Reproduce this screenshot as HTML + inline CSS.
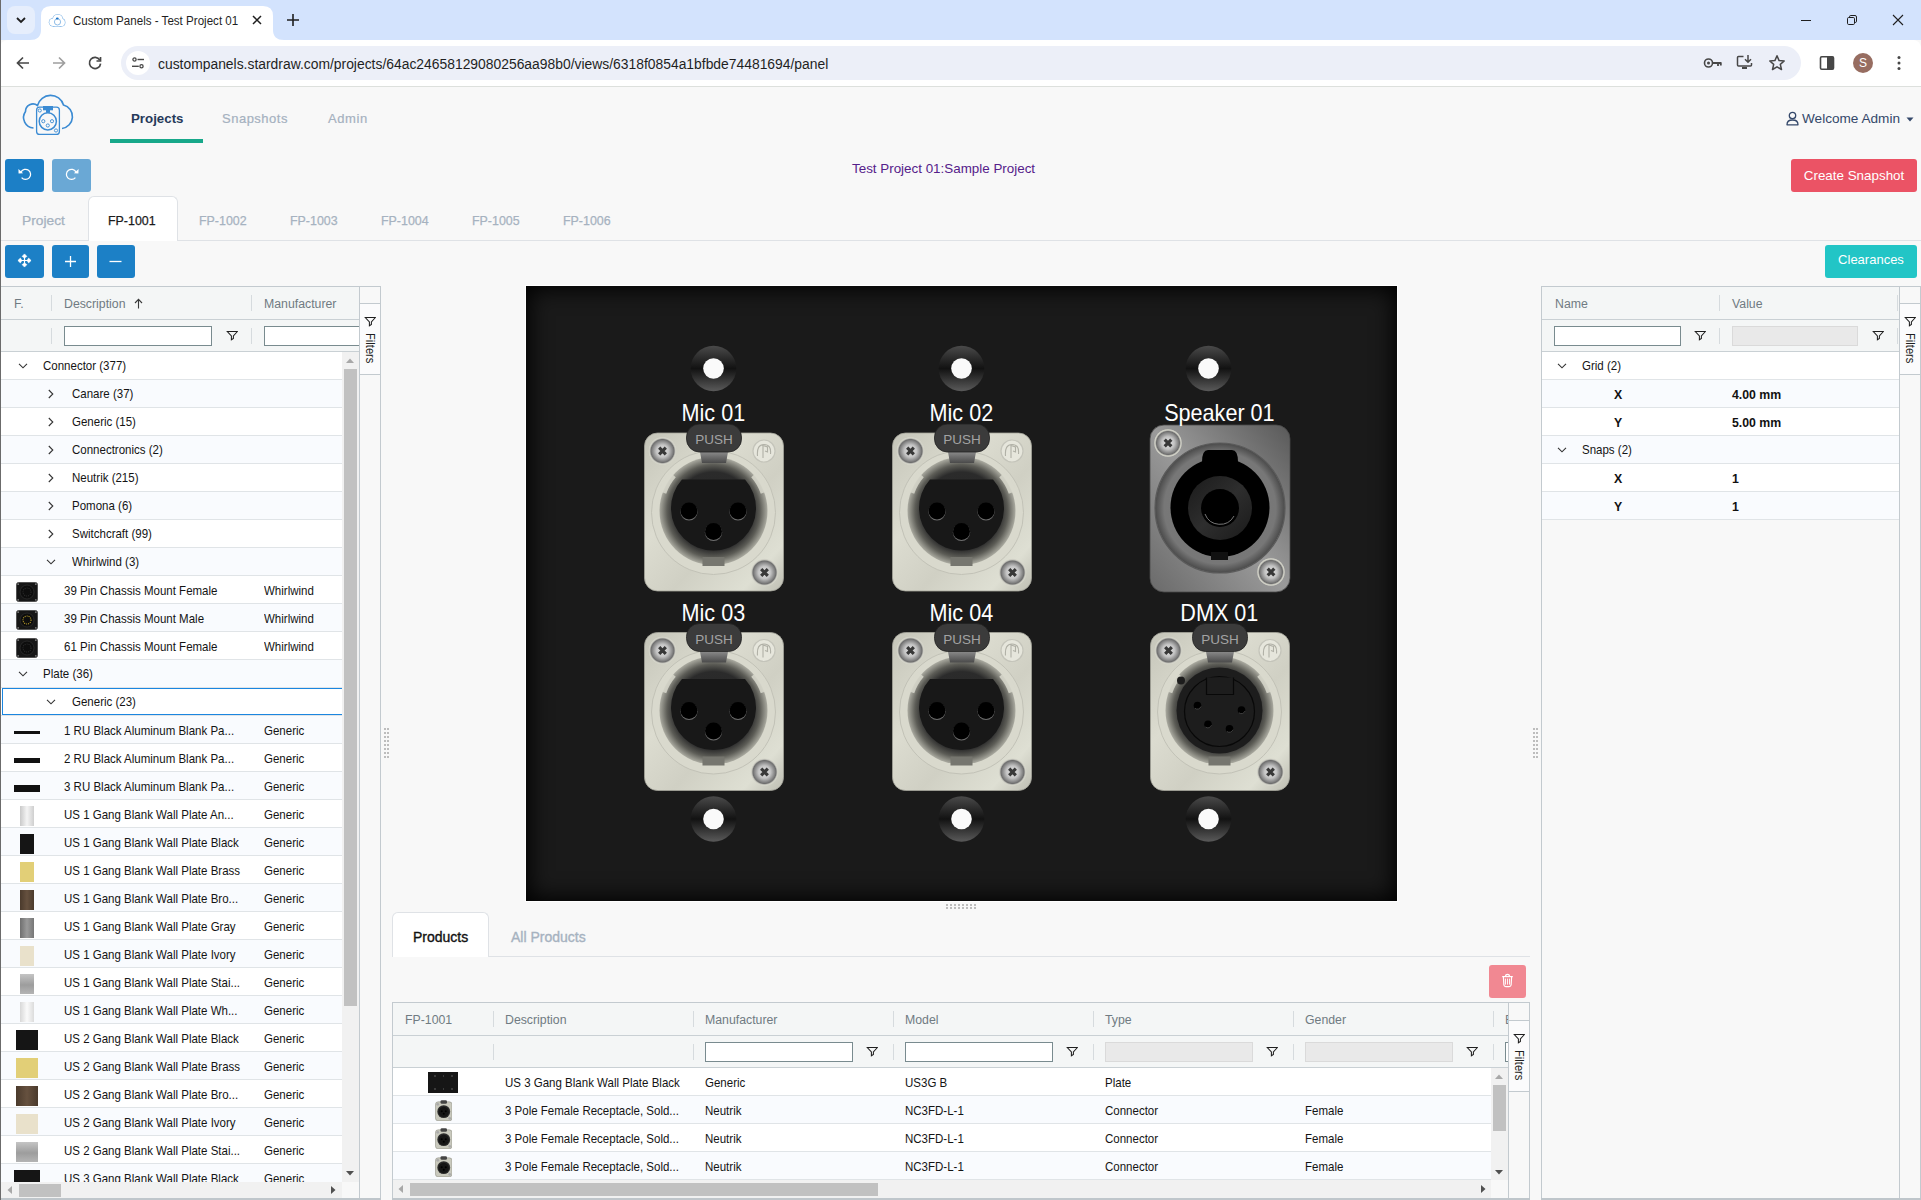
<!DOCTYPE html>
<html><head><meta charset="utf-8"><title>Custom Panels - Test Project 01</title>
<style>
*{box-sizing:border-box;margin:0;padding:0}
html,body{width:1921px;height:1200px;overflow:hidden;background:#f8f8f8;font-family:"Liberation Sans",sans-serif;color:#222;position:relative}
.a{position:absolute}
.t{position:absolute;white-space:nowrap;line-height:1}
.sx{display:inline-block;transform-origin:0 0}
.btn{position:absolute;border-radius:3px;background:#1c80c6}
</style></head>
<body>
<div class="a" style="left:0;top:0;width:1921px;height:40px;background:#d3e3fd"></div>
<div class="a" style="left:7px;top:6px;width:28px;height:28px;border-radius:8px;background:#e6eefc"></div>
<svg class="a" style="left:14px;top:13px" width="14" height="14" viewBox="0 0 14 14"><path d="M3 5 L7 9 L11 5" fill="none" stroke="#1f1f1f" stroke-width="1.8"/></svg>
<svg class="a" style="left:30px;top:6px" width="254" height="34" viewBox="0 0 254 34"><path d="M0 34 Q11 34 11 24 L11 10 Q11 0 21 0 L233 0 Q243 0 243 10 L243 24 Q243 34 254 34 Z" fill="#fff"/></svg>
<svg class="a" style="left:48px;top:13px" width="18" height="15" viewBox="0 0 18 15"><g fill="#6aa8e2"><circle cx="5" cy="9.3" r="4.2"/><circle cx="9.8" cy="6.3" r="5.4"/><circle cx="13.3" cy="9.4" r="4.1"/><rect x="5" y="8" width="8.3" height="5.5"/></g><g fill="#fff"><circle cx="5" cy="9.3" r="3.7"/><circle cx="9.8" cy="6.3" r="4.9"/><circle cx="13.3" cy="9.4" r="3.6"/><rect x="5" y="8" width="8.3" height="5"/></g><circle cx="9.5" cy="8.9" r="3.1" fill="none" stroke="#8cbbe6" stroke-width="1"/><ellipse cx="9.3" cy="5.4" rx="1.4" ry="1" fill="#1b72c6"/></svg>
<div class="t" style="left:73px;top:15px;font-size:12px;color:#1f1f1f"><span class="sx" style="transform:scaleX(.965)">Custom Panels - Test Project 01</span></div>
<svg class="a" style="left:251px;top:14px" width="12" height="12" viewBox="0 0 12 12"><path d="M2 2 L10 10 M10 2 L2 10" stroke="#1f1f1f" stroke-width="1.5"/></svg>
<svg class="a" style="left:286px;top:13px" width="14" height="14" viewBox="0 0 14 14"><path d="M7 1 V13 M1 7 H13" stroke="#1f1f1f" stroke-width="1.6"/></svg>
<div class="a" style="left:1801px;top:20px;width:10px;height:1px;background:#1f1f1f"></div>
<svg class="a" style="left:1845px;top:13px" width="14" height="14" viewBox="0 0 14 14"><rect x="2.5" y="4.5" width="7" height="7" rx="1.2" fill="none" stroke="#1f1f1f" stroke-width="1"/><path d="M4.5 4.5 V3.8 Q4.5 2.5 5.8 2.5 H10 Q11.5 2.5 11.5 4 V8.2 Q11.5 9.5 10.2 9.5 H9.5" fill="none" stroke="#1f1f1f" stroke-width="1"/></svg>
<svg class="a" style="left:1891px;top:13px" width="14" height="14" viewBox="0 0 14 14"><path d="M2 2 L12 12 M12 2 L2 12" stroke="#1f1f1f" stroke-width="1.1"/></svg>
<div class="a" style="left:0;top:40px;width:1921px;height:47px;background:#fff;border-radius:8px 8px 0 0;border-bottom:1px solid #dde0dd"></div>
<div class="a" style="left:121px;top:46px;width:1680px;height:34px;border-radius:17px;background:#eceff8"></div>
<svg class="a" style="left:15px;top:55px" width="16" height="16" viewBox="0 0 16 16"><path d="M14 8 H3 M8 2.5 L2.5 8 L8 13.5" fill="none" stroke="#474747" stroke-width="1.7"/></svg>
<svg class="a" style="left:51px;top:55px" width="16" height="16" viewBox="0 0 16 16"><path d="M2 8 H13 M8 2.5 L13.5 8 L8 13.5" fill="none" stroke="#9e9e9e" stroke-width="1.7"/></svg>
<svg class="a" style="left:87px;top:55px" width="16" height="16" viewBox="0 0 16 16"><path d="M12.8 5 A5.6 5.6 0 1 0 13.6 8.6" fill="none" stroke="#474747" stroke-width="1.7"/><path d="M13.5 2 V6 H9.5" fill="none" stroke="#474747" stroke-width="1.7"/></svg>
<div class="a" style="left:126px;top:51px;width:24px;height:24px;border-radius:12px;background:#fff"></div>
<svg class="a" style="left:131px;top:56px" width="14" height="14" viewBox="0 0 14 14"><circle cx="3.5" cy="3.5" r="1.6" fill="none" stroke="#474747" stroke-width="1.3"/><path d="M6.5 3.5 H13" stroke="#474747" stroke-width="1.4"/><circle cx="10.5" cy="10.3" r="1.6" fill="none" stroke="#474747" stroke-width="1.3"/><path d="M1 10.3 H7.8" stroke="#474747" stroke-width="1.4"/></svg>
<div class="t" style="left:158px;top:57px;font-size:14px;color:#1f1f1f"><span class="sx" style="transform:scaleX(.991)">custompanels.stardraw.com/projects/64ac24658129080256aa98b0/views/6318f0854a1bfbde74481694/panel</span></div>
<svg class="a" style="left:1703px;top:55px" width="20" height="16" viewBox="0 0 20 16"><circle cx="5.5" cy="8" r="4" fill="none" stroke="#474747" stroke-width="1.6"/><circle cx="5.5" cy="8" r="1.5" fill="#474747"/><path d="M9.5 8 H18.5 M15 8 V11 M17.8 8 V10.5" stroke="#474747" stroke-width="1.8"/></svg>
<svg class="a" style="left:1736px;top:54px" width="18" height="18" viewBox="0 0 18 18"><path d="M7.5 2.5 H2.5 Q1.5 2.5 1.5 3.5 V11 Q1.5 12 2.5 12 H14.5 Q15.5 12 15.5 11 V9" fill="none" stroke="#474747" stroke-width="1.5"/><path d="M12 1 V8 M9 5.2 L12 8.2 L15 5.2" fill="none" stroke="#474747" stroke-width="1.5"/><rect x="6" y="13" width="5" height="2" fill="#474747"/></svg>
<svg class="a" style="left:1768px;top:54px" width="18" height="18" viewBox="0 0 18 18"><path d="M9 1.8 L11.1 6.6 L16.2 7 L12.3 10.4 L13.5 15.5 L9 12.8 L4.5 15.5 L5.7 10.4 L1.8 7 L6.9 6.6 Z" fill="none" stroke="#474747" stroke-width="1.5" stroke-linejoin="round"/></svg>
<svg class="a" style="left:1819px;top:55px" width="16" height="16" viewBox="0 0 16 16"><rect x="1.5" y="1.8" width="13" height="12.4" rx="1.2" fill="none" stroke="#474747" stroke-width="1.6"/><rect x="8" y="1.8" width="6.5" height="12.4" fill="#474747"/></svg>
<div class="a" style="left:1853px;top:53px;width:20px;height:20px;border-radius:10px;background:#976d61"></div>
<div class="t" style="left:1853px;top:57px;width:20px;text-align:center;font-size:12px;color:#fff">S</div>
<svg class="a" style="left:1895px;top:55px" width="8" height="16" viewBox="0 0 8 16"><circle cx="4" cy="2.5" r="1.5" fill="#474747"/><circle cx="4" cy="8" r="1.5" fill="#474747"/><circle cx="4" cy="13.5" r="1.5" fill="#474747"/></svg>
<div class="a" style="left:0;top:0;width:1px;height:1200px;background:#6b6b6b;z-index:60"></div>
<svg class="a" style="left:16px;top:90px" width="64" height="50" viewBox="0 0 64 50"><path d="M17.5 38 A10.5 10.5 0 0 1 9.5 21.5 A7.5 7.5 0 0 1 21.5 15.5 A13.5 13.5 0 0 1 47.5 15 A12 12 0 0 1 46 38.5" fill="none" stroke="#3b8bd3" stroke-width="1.6"/><rect x="20.6" y="17.2" width="22.8" height="27.2" rx="3" fill="none" stroke="#3b8bd3" stroke-width="1.3"/><rect x="27" y="16" width="10" height="4.3" fill="#3b8bd3"/><rect x="30" y="20" width="4" height="2.8" fill="#3b8bd3"/><circle cx="31.8" cy="31.3" r="8.6" fill="none" stroke="#3b8bd3" stroke-width="1.5"/><circle cx="27.3" cy="31.2" r="1.6" fill="none" stroke="#3b8bd3" stroke-width="0.9"/><circle cx="36" cy="31.2" r="1.6" fill="none" stroke="#3b8bd3" stroke-width="0.9"/><circle cx="31.8" cy="35.5" r="1.6" fill="none" stroke="#3b8bd3" stroke-width="0.9"/><circle cx="23.8" cy="20.5" r="1.6" fill="none" stroke="#3b8bd3" stroke-width="0.9"/><circle cx="40" cy="40.5" r="1.6" fill="none" stroke="#3b8bd3" stroke-width="0.9"/></svg>
<div class="t" style="left:131px;top:112px;font-size:13.3px;font-weight:bold;color:#263a5a">Projects</div>
<div class="a" style="left:110px;top:139px;width:93px;height:4px;background:#17a88a"></div>
<div class="t" style="left:222px;top:112px;font-size:13px;letter-spacing:.5px;-webkit-text-stroke:.2px #a5b1bf;color:#a5b1bf">Snapshots</div>
<div class="t" style="left:328px;top:112px;font-size:13px;letter-spacing:.6px;-webkit-text-stroke:.2px #a5b1bf;color:#a5b1bf">Admin</div>
<svg class="a" style="left:1786px;top:111px" width="13" height="15" viewBox="0 0 13 15"><circle cx="6.5" cy="4.5" r="3.2" fill="none" stroke="#34486a" stroke-width="1.3"/><path d="M1 13.8 Q1 9 6.5 9 Q12 9 12 13.8 Z" fill="none" stroke="#34486a" stroke-width="1.3" stroke-linejoin="round"/></svg>
<div class="t" style="left:1802px;top:112px;font-size:13.6px;color:#34486a">Welcome Admin</div>
<svg class="a" style="left:1906px;top:117px" width="8" height="5" viewBox="0 0 8 5"><path d="M0.5 0.5 H7.5 L4 4.5 Z" fill="#34486a"/></svg>
<div class="btn" style="left:5px;top:159px;width:39px;height:33px;background:#1c7fc6"></div>
<svg class="a" style="left:17px;top:166px" width="17" height="17" viewBox="0 0 17 17"><path d="M4.08 5.85 A5.1 5.1 0 1 1 4.6 11.68" fill="none" stroke="#fff" stroke-width="1.25"/><path d="M1.4 2.9 L1.6 7.6 L6.1 7.2 Z" fill="#fff"/></svg>
<div class="btn" style="left:52px;top:159px;width:39px;height:33px;background:#6aa8d5"></div>
<svg class="a" style="left:63px;top:166px" width="17" height="17" viewBox="0 0 17 17"><g transform="translate(17,0) scale(-1,1)"><path d="M4.08 5.85 A5.1 5.1 0 1 1 4.6 11.68" fill="none" stroke="#fff" stroke-width="1.25"/><path d="M1.4 2.9 L1.6 7.6 L6.1 7.2 Z" fill="#fff"/></g></svg>
<div class="t" style="left:852px;top:162px;font-size:13.4px;color:#55208a">Test Project 01:Sample Project</div>
<div class="btn" style="left:1791px;top:159px;width:126px;height:33px;background:#eb5365"></div>
<div class="t" style="left:1791px;top:169px;width:126px;text-align:center;font-size:13.4px;color:#fff">Create Snapshot</div>
<div class="a" style="left:0;top:240px;width:1921px;height:1px;background:#dfe2e6"></div>
<div class="a" style="left:88px;top:196px;width:90px;height:45px;background:#fff;border:1px solid #dfe2e6;border-bottom:none;border-radius:6px 6px 0 0"></div>
<div class="t" style="left:22px;top:214px;font-size:13px;color:#a6b2c0;-webkit-text-stroke:.25px #a6b2c0"><span style="display:inline-block;transform:scaleX(1.06);transform-origin:0 0">Project</span></div>
<div class="t" style="left:108px;top:214px;font-size:13px;color:#1b1b1b;-webkit-text-stroke:.25px #1b1b1b"><span style="display:inline-block;transform:scaleX(0.955);transform-origin:0 0">FP-1001</span></div>
<div class="t" style="left:199px;top:214px;font-size:13px;color:#a6b2c0;-webkit-text-stroke:.25px #a6b2c0"><span style="display:inline-block;transform:scaleX(0.955);transform-origin:0 0">FP-1002</span></div>
<div class="t" style="left:290px;top:214px;font-size:13px;color:#a6b2c0;-webkit-text-stroke:.25px #a6b2c0"><span style="display:inline-block;transform:scaleX(0.955);transform-origin:0 0">FP-1003</span></div>
<div class="t" style="left:381px;top:214px;font-size:13px;color:#a6b2c0;-webkit-text-stroke:.25px #a6b2c0"><span style="display:inline-block;transform:scaleX(0.955);transform-origin:0 0">FP-1004</span></div>
<div class="t" style="left:472px;top:214px;font-size:13px;color:#a6b2c0;-webkit-text-stroke:.25px #a6b2c0"><span style="display:inline-block;transform:scaleX(0.955);transform-origin:0 0">FP-1005</span></div>
<div class="t" style="left:563px;top:214px;font-size:13px;color:#a6b2c0;-webkit-text-stroke:.25px #a6b2c0"><span style="display:inline-block;transform:scaleX(0.955);transform-origin:0 0">FP-1006</span></div>
<div class="btn" style="left:5px;top:245px;width:39px;height:33px"></div>
<svg class="a" style="left:17px;top:253px" width="15" height="15" viewBox="-7.5 -7.5 15 15"><path d="M0 -5 V5 M-5 0 H5" stroke="#fff" stroke-width="1.2"/><g fill="#fff" stroke="#fff" stroke-width="0.6" stroke-linejoin="round"><path d="M0 -6.6 L2.4 -4.1 L0 -2.6 L-2.4 -4.1 Z"/><path d="M0 6.6 L2.4 4.1 L0 2.6 L-2.4 4.1 Z"/><path d="M-6.6 0 L-4.1 2.4 L-2.6 0 L-4.1 -2.4 Z"/><path d="M6.6 0 L4.1 2.4 L2.6 0 L4.1 -2.4 Z"/></g></svg>
<div class="btn" style="left:52px;top:245px;width:37px;height:33px"></div>
<svg class="a" style="left:63px;top:254px" width="15" height="15" viewBox="0 0 15 15"><path d="M7.5 2 V13 M2 7.5 H13" stroke="#fff" stroke-width="1.3"/></svg>
<div class="btn" style="left:97px;top:245px;width:38px;height:33px"></div>
<svg class="a" style="left:108px;top:254px" width="15" height="15" viewBox="0 0 15 15"><path d="M1.5 7.5 H13.5" stroke="#fff" stroke-width="1.3"/></svg>
<div class="btn" style="left:1825px;top:245px;width:92px;height:33px;background:#22c5c6"></div>
<div class="t" style="left:1825px;top:253px;width:92px;text-align:center;font-size:13px;color:#fff">Clearances</div>
<div class="a" style="left:1px;top:286px;width:358px;height:66px;background:#f4f6f6;"></div>
<div class="a" style="left:1px;top:286px;width:359px;height:1px;background:#c3cacf"></div>
<div class="a" style="left:1px;top:319px;width:358px;height:1px;background:#c9d0d4"></div>
<div class="a" style="left:1px;top:351px;width:358px;height:1px;background:#c9d0d4"></div>
<div class="t" style="left:14px;top:298px;font-size:12.3px;color:#707b82;">F.</div>
<div class="a" style="left:51px;top:295px;width:1px;height:16px;background:#d6dbde"></div>
<div class="t" style="left:64px;top:298px;font-size:12.3px;color:#707b82;">Description</div>
<svg class="a" style="left:134px;top:298px" width="9" height="11" viewBox="0 0 9 11"><path d="M4.5 10.5 V1.5 M1 5 L4.5 1.3 L8 5" fill="none" stroke="#3a3a3a" stroke-width="1.1"/></svg>
<div class="a" style="left:251px;top:295px;width:1px;height:16px;background:#d6dbde"></div>
<div class="t" style="left:264px;top:298px;font-size:12.3px;color:#707b82;">Manufacturer</div>
<div class="a" style="left:51px;top:328px;width:1px;height:16px;background:#d6dbde"></div>
<div class="a" style="left:64px;top:326px;width:148px;height:20px;background:#fff;border:1px solid #798b8f"></div>
<svg class="a" style="left:226px;top:330px" width="12" height="12" viewBox="0 0 12 12"><path d="M1.3 1.5 H11.4 L7.4 5.9 V8.5 L5.4 9.8 V5.9 Z" fill="none" stroke="#1f1f1f" stroke-width="1.05" stroke-linejoin="miter"/></svg>
<div class="a" style="left:251px;top:328px;width:1px;height:16px;background:#d6dbde"></div>
<div class="a" style="left:264px;top:326px;width:96px;height:20px;background:#fff;border:1px solid #798b8f;border-right:none"></div>
<div class="a" style="left:1px;top:352px;width:341px;height:830px;overflow:hidden;background:#fff"><div class="a" style="left:0px;top:0px;width:341px;height:28px;background:#ffffff;"></div>
<div class="a" style="left:0px;top:27px;width:341px;height:1px;background:#e0e4e7"></div>
<svg class="a" style="left:16.5px;top:11px" width="10" height="6" viewBox="0 0 10 6"><path d="M1 0.8 L5 4.8 L9 0.8" fill="none" stroke="#333" stroke-width="1.1"/></svg>
<div class="t" style="left:42px;top:7px;font-size:13px;color:#141414;"><span style="transform:scaleX(.885);transform-origin:0 0;display:inline-block">Connector (377)</span></div>
<div class="a" style="left:0px;top:28px;width:341px;height:28px;background:#f9fbfe;"></div>
<div class="a" style="left:0px;top:55px;width:341px;height:1px;background:#e0e4e7"></div>
<svg class="a" style="left:47px;top:37px" width="6" height="10" viewBox="0 0 6 10"><path d="M0.8 1 L4.8 5 L0.8 9" fill="none" stroke="#333" stroke-width="1.1"/></svg>
<div class="t" style="left:71px;top:35px;font-size:13px;color:#141414;"><span style="transform:scaleX(.885);transform-origin:0 0;display:inline-block">Canare (37)</span></div>
<div class="a" style="left:0px;top:56px;width:341px;height:28px;background:#ffffff;"></div>
<div class="a" style="left:0px;top:83px;width:341px;height:1px;background:#e0e4e7"></div>
<svg class="a" style="left:47px;top:65px" width="6" height="10" viewBox="0 0 6 10"><path d="M0.8 1 L4.8 5 L0.8 9" fill="none" stroke="#333" stroke-width="1.1"/></svg>
<div class="t" style="left:71px;top:63px;font-size:13px;color:#141414;"><span style="transform:scaleX(.885);transform-origin:0 0;display:inline-block">Generic (15)</span></div>
<div class="a" style="left:0px;top:84px;width:341px;height:28px;background:#f9fbfe;"></div>
<div class="a" style="left:0px;top:111px;width:341px;height:1px;background:#e0e4e7"></div>
<svg class="a" style="left:47px;top:93px" width="6" height="10" viewBox="0 0 6 10"><path d="M0.8 1 L4.8 5 L0.8 9" fill="none" stroke="#333" stroke-width="1.1"/></svg>
<div class="t" style="left:71px;top:91px;font-size:13px;color:#141414;"><span style="transform:scaleX(.885);transform-origin:0 0;display:inline-block">Connectronics (2)</span></div>
<div class="a" style="left:0px;top:112px;width:341px;height:28px;background:#ffffff;"></div>
<div class="a" style="left:0px;top:139px;width:341px;height:1px;background:#e0e4e7"></div>
<svg class="a" style="left:47px;top:121px" width="6" height="10" viewBox="0 0 6 10"><path d="M0.8 1 L4.8 5 L0.8 9" fill="none" stroke="#333" stroke-width="1.1"/></svg>
<div class="t" style="left:71px;top:119px;font-size:13px;color:#141414;"><span style="transform:scaleX(.885);transform-origin:0 0;display:inline-block">Neutrik (215)</span></div>
<div class="a" style="left:0px;top:140px;width:341px;height:28px;background:#f9fbfe;"></div>
<div class="a" style="left:0px;top:167px;width:341px;height:1px;background:#e0e4e7"></div>
<svg class="a" style="left:47px;top:149px" width="6" height="10" viewBox="0 0 6 10"><path d="M0.8 1 L4.8 5 L0.8 9" fill="none" stroke="#333" stroke-width="1.1"/></svg>
<div class="t" style="left:71px;top:147px;font-size:13px;color:#141414;"><span style="transform:scaleX(.885);transform-origin:0 0;display:inline-block">Pomona (6)</span></div>
<div class="a" style="left:0px;top:168px;width:341px;height:28px;background:#ffffff;"></div>
<div class="a" style="left:0px;top:195px;width:341px;height:1px;background:#e0e4e7"></div>
<svg class="a" style="left:47px;top:177px" width="6" height="10" viewBox="0 0 6 10"><path d="M0.8 1 L4.8 5 L0.8 9" fill="none" stroke="#333" stroke-width="1.1"/></svg>
<div class="t" style="left:71px;top:175px;font-size:13px;color:#141414;"><span style="transform:scaleX(.885);transform-origin:0 0;display:inline-block">Switchcraft (99)</span></div>
<div class="a" style="left:0px;top:196px;width:341px;height:28px;background:#f9fbfe;"></div>
<div class="a" style="left:0px;top:223px;width:341px;height:1px;background:#e0e4e7"></div>
<svg class="a" style="left:45px;top:207px" width="10" height="6" viewBox="0 0 10 6"><path d="M1 0.8 L5 4.8 L9 0.8" fill="none" stroke="#333" stroke-width="1.1"/></svg>
<div class="t" style="left:71px;top:203px;font-size:13px;color:#141414;"><span style="transform:scaleX(.885);transform-origin:0 0;display:inline-block">Whirlwind (3)</span></div>
<div class="a" style="left:0px;top:224px;width:341px;height:28px;background:#ffffff;"></div>
<div class="a" style="left:0px;top:251px;width:341px;height:1px;background:#e0e4e7"></div>
<svg class="a" style="left:15px;top:230px" width="22" height="20" viewBox="0 0 22 20"><rect x="0.5" y="0.5" width="21" height="19" rx="2" fill="#161616" stroke="#444" stroke-width="0.8"/><circle cx="11" cy="10" r="7" fill="#0d0d0d" stroke="#2c2c2c" stroke-width="0.8"/><circle cx="11" cy="10" r="4" fill="none" stroke="#2a2a2a" stroke-width="1.2" stroke-dasharray="1 1"/><circle cx="2.2" cy="2.2" r="0.9" fill="#777"/><circle cx="19.8" cy="2.2" r="0.9" fill="#777"/><circle cx="2.2" cy="17.8" r="0.9" fill="#777"/><circle cx="19.8" cy="17.8" r="0.9" fill="#777"/></svg>
<div class="t" style="left:63px;top:232px;font-size:13px;color:#141414;"><span style="transform:scaleX(.885);transform-origin:0 0;display:inline-block">39 Pin Chassis Mount Female</span></div>
<div class="t" style="left:263px;top:232px;font-size:13px;color:#141414;"><span style="transform:scaleX(.885);transform-origin:0 0;display:inline-block">Whirlwind</span></div>
<div class="a" style="left:0px;top:252px;width:341px;height:28px;background:#f9fbfe;"></div>
<div class="a" style="left:0px;top:279px;width:341px;height:1px;background:#e0e4e7"></div>
<svg class="a" style="left:15px;top:258px" width="22" height="20" viewBox="0 0 22 20"><rect x="0.5" y="0.5" width="21" height="19" rx="2" fill="#161616" stroke="#444" stroke-width="0.8"/><circle cx="11" cy="10" r="7" fill="#0d0d0d" stroke="#2c2c2c" stroke-width="0.8"/><circle cx="11" cy="10" r="4" fill="none" stroke="#b59a2a" stroke-width="1.2" stroke-dasharray="1 1"/><circle cx="2.2" cy="2.2" r="0.9" fill="#777"/><circle cx="19.8" cy="2.2" r="0.9" fill="#777"/><circle cx="2.2" cy="17.8" r="0.9" fill="#777"/><circle cx="19.8" cy="17.8" r="0.9" fill="#777"/></svg>
<div class="t" style="left:63px;top:260px;font-size:13px;color:#141414;"><span style="transform:scaleX(.885);transform-origin:0 0;display:inline-block">39 Pin Chassis Mount Male</span></div>
<div class="t" style="left:263px;top:260px;font-size:13px;color:#141414;"><span style="transform:scaleX(.885);transform-origin:0 0;display:inline-block">Whirlwind</span></div>
<div class="a" style="left:0px;top:280px;width:341px;height:28px;background:#ffffff;"></div>
<div class="a" style="left:0px;top:307px;width:341px;height:1px;background:#e0e4e7"></div>
<svg class="a" style="left:15px;top:286px" width="22" height="20" viewBox="0 0 22 20"><rect x="0.5" y="0.5" width="21" height="19" rx="2" fill="#161616" stroke="#444" stroke-width="0.8"/><circle cx="11" cy="10" r="7" fill="#0d0d0d" stroke="#2c2c2c" stroke-width="0.8"/><circle cx="11" cy="10" r="4" fill="none" stroke="#2a2a2a" stroke-width="1.2" stroke-dasharray="1 1"/><circle cx="2.2" cy="2.2" r="0.9" fill="#777"/><circle cx="19.8" cy="2.2" r="0.9" fill="#777"/><circle cx="2.2" cy="17.8" r="0.9" fill="#777"/><circle cx="19.8" cy="17.8" r="0.9" fill="#777"/></svg>
<div class="t" style="left:63px;top:288px;font-size:13px;color:#141414;"><span style="transform:scaleX(.885);transform-origin:0 0;display:inline-block">61 Pin Chassis Mount Female</span></div>
<div class="t" style="left:263px;top:288px;font-size:13px;color:#141414;"><span style="transform:scaleX(.885);transform-origin:0 0;display:inline-block">Whirlwind</span></div>
<div class="a" style="left:0px;top:308px;width:341px;height:28px;background:#f9fbfe;"></div>
<div class="a" style="left:0px;top:335px;width:341px;height:1px;background:#e0e4e7"></div>
<svg class="a" style="left:16.5px;top:319px" width="10" height="6" viewBox="0 0 10 6"><path d="M1 0.8 L5 4.8 L9 0.8" fill="none" stroke="#333" stroke-width="1.1"/></svg>
<div class="t" style="left:42px;top:315px;font-size:13px;color:#141414;"><span style="transform:scaleX(.885);transform-origin:0 0;display:inline-block">Plate (36)</span></div>
<div class="a" style="left:0px;top:336px;width:341px;height:28px;background:#ffffff;"></div>
<div class="a" style="left:0px;top:363px;width:341px;height:1px;background:#e0e4e7"></div>
<svg class="a" style="left:45px;top:347px" width="10" height="6" viewBox="0 0 10 6"><path d="M1 0.8 L5 4.8 L9 0.8" fill="none" stroke="#333" stroke-width="1.1"/></svg>
<div class="t" style="left:71px;top:343px;font-size:13px;color:#141414;"><span style="transform:scaleX(.885);transform-origin:0 0;display:inline-block">Generic (23)</span></div>
<div class="a" style="left:0px;top:364px;width:341px;height:28px;background:#f9fbfe;"></div>
<div class="a" style="left:0px;top:391px;width:341px;height:1px;background:#e0e4e7"></div>
<div class="a" style="left:13px;top:379px;width:26px;height:3px;background:#111;"></div>
<div class="t" style="left:63px;top:372px;font-size:13px;color:#141414;"><span style="transform:scaleX(.885);transform-origin:0 0;display:inline-block">1 RU Black Aluminum Blank Pa...</span></div>
<div class="t" style="left:263px;top:372px;font-size:13px;color:#141414;"><span style="transform:scaleX(.885);transform-origin:0 0;display:inline-block">Generic</span></div>
<div class="a" style="left:0px;top:392px;width:341px;height:28px;background:#ffffff;"></div>
<div class="a" style="left:0px;top:419px;width:341px;height:1px;background:#e0e4e7"></div>
<div class="a" style="left:13px;top:406px;width:26px;height:5px;background:#111;"></div>
<div class="t" style="left:63px;top:400px;font-size:13px;color:#141414;"><span style="transform:scaleX(.885);transform-origin:0 0;display:inline-block">2 RU Black Aluminum Blank Pa...</span></div>
<div class="t" style="left:263px;top:400px;font-size:13px;color:#141414;"><span style="transform:scaleX(.885);transform-origin:0 0;display:inline-block">Generic</span></div>
<div class="a" style="left:0px;top:420px;width:341px;height:28px;background:#f9fbfe;"></div>
<div class="a" style="left:0px;top:447px;width:341px;height:1px;background:#e0e4e7"></div>
<div class="a" style="left:13px;top:433px;width:26px;height:7px;background:#111;"></div>
<div class="t" style="left:63px;top:428px;font-size:13px;color:#141414;"><span style="transform:scaleX(.885);transform-origin:0 0;display:inline-block">3 RU Black Aluminum Blank Pa...</span></div>
<div class="t" style="left:263px;top:428px;font-size:13px;color:#141414;"><span style="transform:scaleX(.885);transform-origin:0 0;display:inline-block">Generic</span></div>
<div class="a" style="left:0px;top:448px;width:341px;height:28px;background:#ffffff;"></div>
<div class="a" style="left:0px;top:475px;width:341px;height:1px;background:#e0e4e7"></div>
<div class="a" style="left:19px;top:454px;width:14px;height:20px;background:linear-gradient(90deg,#c9c9c9,#f4f4f4 50%,#cfcfcf);"></div>
<div class="t" style="left:63px;top:456px;font-size:13px;color:#141414;"><span style="transform:scaleX(.885);transform-origin:0 0;display:inline-block">US 1 Gang Blank Wall Plate An...</span></div>
<div class="t" style="left:263px;top:456px;font-size:13px;color:#141414;"><span style="transform:scaleX(.885);transform-origin:0 0;display:inline-block">Generic</span></div>
<div class="a" style="left:0px;top:476px;width:341px;height:28px;background:#f9fbfe;"></div>
<div class="a" style="left:0px;top:503px;width:341px;height:1px;background:#e0e4e7"></div>
<div class="a" style="left:19px;top:482px;width:14px;height:20px;background:#151515;"></div>
<div class="t" style="left:63px;top:484px;font-size:13px;color:#141414;"><span style="transform:scaleX(.885);transform-origin:0 0;display:inline-block">US 1 Gang Blank Wall Plate Black</span></div>
<div class="t" style="left:263px;top:484px;font-size:13px;color:#141414;"><span style="transform:scaleX(.885);transform-origin:0 0;display:inline-block">Generic</span></div>
<div class="a" style="left:0px;top:504px;width:341px;height:28px;background:#ffffff;"></div>
<div class="a" style="left:0px;top:531px;width:341px;height:1px;background:#e0e4e7"></div>
<div class="a" style="left:19px;top:510px;width:14px;height:20px;background:#e2cf77;"></div>
<div class="t" style="left:63px;top:512px;font-size:13px;color:#141414;"><span style="transform:scaleX(.885);transform-origin:0 0;display:inline-block">US 1 Gang Blank Wall Plate Brass</span></div>
<div class="t" style="left:263px;top:512px;font-size:13px;color:#141414;"><span style="transform:scaleX(.885);transform-origin:0 0;display:inline-block">Generic</span></div>
<div class="a" style="left:0px;top:532px;width:341px;height:28px;background:#f9fbfe;"></div>
<div class="a" style="left:0px;top:559px;width:341px;height:1px;background:#e0e4e7"></div>
<div class="a" style="left:19px;top:538px;width:14px;height:20px;background:linear-gradient(90deg,#4a3a2c,#66513f 50%,#4a3a2c);"></div>
<div class="t" style="left:63px;top:540px;font-size:13px;color:#141414;"><span style="transform:scaleX(.885);transform-origin:0 0;display:inline-block">US 1 Gang Blank Wall Plate Bro...</span></div>
<div class="t" style="left:263px;top:540px;font-size:13px;color:#141414;"><span style="transform:scaleX(.885);transform-origin:0 0;display:inline-block">Generic</span></div>
<div class="a" style="left:0px;top:560px;width:341px;height:28px;background:#ffffff;"></div>
<div class="a" style="left:0px;top:587px;width:341px;height:1px;background:#e0e4e7"></div>
<div class="a" style="left:19px;top:566px;width:14px;height:20px;background:linear-gradient(90deg,#6f6f6f,#9a9a9a 50%,#777);"></div>
<div class="t" style="left:63px;top:568px;font-size:13px;color:#141414;"><span style="transform:scaleX(.885);transform-origin:0 0;display:inline-block">US 1 Gang Blank Wall Plate Gray</span></div>
<div class="t" style="left:263px;top:568px;font-size:13px;color:#141414;"><span style="transform:scaleX(.885);transform-origin:0 0;display:inline-block">Generic</span></div>
<div class="a" style="left:0px;top:588px;width:341px;height:28px;background:#f9fbfe;"></div>
<div class="a" style="left:0px;top:615px;width:341px;height:1px;background:#e0e4e7"></div>
<div class="a" style="left:19px;top:594px;width:14px;height:20px;background:#e9e1cb;"></div>
<div class="t" style="left:63px;top:596px;font-size:13px;color:#141414;"><span style="transform:scaleX(.885);transform-origin:0 0;display:inline-block">US 1 Gang Blank Wall Plate Ivory</span></div>
<div class="t" style="left:263px;top:596px;font-size:13px;color:#141414;"><span style="transform:scaleX(.885);transform-origin:0 0;display:inline-block">Generic</span></div>
<div class="a" style="left:0px;top:616px;width:341px;height:28px;background:#ffffff;"></div>
<div class="a" style="left:0px;top:643px;width:341px;height:1px;background:#e0e4e7"></div>
<div class="a" style="left:19px;top:622px;width:14px;height:20px;background:linear-gradient(180deg,#c4c4c4,#9d9d9d 55%,#b4b4b4);"></div>
<div class="t" style="left:63px;top:624px;font-size:13px;color:#141414;"><span style="transform:scaleX(.885);transform-origin:0 0;display:inline-block">US 1 Gang Blank Wall Plate Stai...</span></div>
<div class="t" style="left:263px;top:624px;font-size:13px;color:#141414;"><span style="transform:scaleX(.885);transform-origin:0 0;display:inline-block">Generic</span></div>
<div class="a" style="left:0px;top:644px;width:341px;height:28px;background:#f9fbfe;"></div>
<div class="a" style="left:0px;top:671px;width:341px;height:1px;background:#e0e4e7"></div>
<div class="a" style="left:19px;top:650px;width:14px;height:20px;background:linear-gradient(90deg,#d8d8d8,#fafafa 50%,#dcdcdc);"></div>
<div class="t" style="left:63px;top:652px;font-size:13px;color:#141414;"><span style="transform:scaleX(.885);transform-origin:0 0;display:inline-block">US 1 Gang Blank Wall Plate Wh...</span></div>
<div class="t" style="left:263px;top:652px;font-size:13px;color:#141414;"><span style="transform:scaleX(.885);transform-origin:0 0;display:inline-block">Generic</span></div>
<div class="a" style="left:0px;top:672px;width:341px;height:28px;background:#ffffff;"></div>
<div class="a" style="left:0px;top:699px;width:341px;height:1px;background:#e0e4e7"></div>
<div class="a" style="left:15px;top:678px;width:22px;height:20px;background:#151515;"></div>
<div class="t" style="left:63px;top:680px;font-size:13px;color:#141414;"><span style="transform:scaleX(.885);transform-origin:0 0;display:inline-block">US 2 Gang Blank Wall Plate Black</span></div>
<div class="t" style="left:263px;top:680px;font-size:13px;color:#141414;"><span style="transform:scaleX(.885);transform-origin:0 0;display:inline-block">Generic</span></div>
<div class="a" style="left:0px;top:700px;width:341px;height:28px;background:#f9fbfe;"></div>
<div class="a" style="left:0px;top:727px;width:341px;height:1px;background:#e0e4e7"></div>
<div class="a" style="left:15px;top:706px;width:22px;height:20px;background:#e2cf77;"></div>
<div class="t" style="left:63px;top:708px;font-size:13px;color:#141414;"><span style="transform:scaleX(.885);transform-origin:0 0;display:inline-block">US 2 Gang Blank Wall Plate Brass</span></div>
<div class="t" style="left:263px;top:708px;font-size:13px;color:#141414;"><span style="transform:scaleX(.885);transform-origin:0 0;display:inline-block">Generic</span></div>
<div class="a" style="left:0px;top:728px;width:341px;height:28px;background:#ffffff;"></div>
<div class="a" style="left:0px;top:755px;width:341px;height:1px;background:#e0e4e7"></div>
<div class="a" style="left:15px;top:734px;width:22px;height:20px;background:linear-gradient(90deg,#4a3a2c,#66513f 50%,#4a3a2c);"></div>
<div class="t" style="left:63px;top:736px;font-size:13px;color:#141414;"><span style="transform:scaleX(.885);transform-origin:0 0;display:inline-block">US 2 Gang Blank Wall Plate Bro...</span></div>
<div class="t" style="left:263px;top:736px;font-size:13px;color:#141414;"><span style="transform:scaleX(.885);transform-origin:0 0;display:inline-block">Generic</span></div>
<div class="a" style="left:0px;top:756px;width:341px;height:28px;background:#f9fbfe;"></div>
<div class="a" style="left:0px;top:783px;width:341px;height:1px;background:#e0e4e7"></div>
<div class="a" style="left:15px;top:762px;width:22px;height:20px;background:#e9e1cb;"></div>
<div class="t" style="left:63px;top:764px;font-size:13px;color:#141414;"><span style="transform:scaleX(.885);transform-origin:0 0;display:inline-block">US 2 Gang Blank Wall Plate Ivory</span></div>
<div class="t" style="left:263px;top:764px;font-size:13px;color:#141414;"><span style="transform:scaleX(.885);transform-origin:0 0;display:inline-block">Generic</span></div>
<div class="a" style="left:0px;top:784px;width:341px;height:28px;background:#ffffff;"></div>
<div class="a" style="left:0px;top:811px;width:341px;height:1px;background:#e0e4e7"></div>
<div class="a" style="left:15px;top:790px;width:22px;height:20px;background:linear-gradient(180deg,#c4c4c4,#9d9d9d 55%,#b4b4b4);"></div>
<div class="t" style="left:63px;top:792px;font-size:13px;color:#141414;"><span style="transform:scaleX(.885);transform-origin:0 0;display:inline-block">US 2 Gang Blank Wall Plate Stai...</span></div>
<div class="t" style="left:263px;top:792px;font-size:13px;color:#141414;"><span style="transform:scaleX(.885);transform-origin:0 0;display:inline-block">Generic</span></div>
<div class="a" style="left:0px;top:812px;width:341px;height:28px;background:#f9fbfe;"></div>
<div class="a" style="left:0px;top:839px;width:341px;height:1px;background:#e0e4e7"></div>
<div class="a" style="left:13px;top:818px;width:26px;height:20px;background:#151515;"></div>
<div class="t" style="left:63px;top:820px;font-size:13px;color:#141414;"><span style="transform:scaleX(.885);transform-origin:0 0;display:inline-block">US 3 Gang Blank Wall Plate Black</span></div>
<div class="t" style="left:263px;top:820px;font-size:13px;color:#141414;"><span style="transform:scaleX(.885);transform-origin:0 0;display:inline-block">Generic</span></div>
<div class="a" style="left:1px;top:336px;width:341px;height:27px;border:1.5px solid #1b86e0"></div></div>
<div class="a" style="left:342px;top:352px;width:17px;height:830px;background:#f1f1f1;"></div>
<svg class="a" style="left:346px;top:358px" width="8" height="5" viewBox="0 0 8 5"><path d="M0 5 L4 0.5 L8 5 Z" fill="#a8a8a8"/></svg>
<div class="a" style="left:344px;top:369px;width:13px;height:637px;background:#c1c1c1;"></div>
<svg class="a" style="left:346px;top:1171px" width="8" height="5" viewBox="0 0 8 5"><path d="M0 0 L4 4.5 L8 0 Z" fill="#505050"/></svg>
<div class="a" style="left:1px;top:1182px;width:341px;height:17px;background:#f1f1f1;"></div>
<svg class="a" style="left:7px;top:1186px" width="5" height="8" viewBox="0 0 5 8"><path d="M5 0 L0.5 4 L5 8 Z" fill="#a8a8a8"/></svg>
<div class="a" style="left:19px;top:1184px;width:42px;height:13px;background:#c1c1c1;"></div>
<svg class="a" style="left:331px;top:1186px" width="5" height="8" viewBox="0 0 5 8"><path d="M0 0 L4.5 4 L0 8 Z" fill="#505050"/></svg>
<div class="a" style="left:342px;top:1182px;width:17px;height:17px;background:#f8f8f8;"></div>
<div class="a" style="left:359px;top:286px;width:1px;height:913px;background:#c3cacf"></div>
<div class="a" style="left:1px;top:1198px;width:359px;height:2px;background:#bfc6cb"></div>
<div class="a" style="left:359px;top:286px;width:22px;height:913px;background:#f8f8f8;"></div>
<div class="a" style="left:359px;top:286px;width:1px;height:913px;background:#c3cacf"></div>
<div class="a" style="left:380px;top:286px;width:1px;height:913px;background:#c3cacf"></div>
<div class="a" style="left:359px;top:286px;width:22px;height:1px;background:#c3cacf"></div>
<div class="a" style="left:359px;top:303px;width:22px;height:1px;background:#c3cacf"></div>
<div class="a" style="left:359px;top:374px;width:22px;height:1px;background:#c3cacf"></div>
<div class="a" style="left:360px;top:304px;width:20px;height:70px;background:#fbfbfc;"></div>
<div class="a" style="left:359px;top:1198px;width:22px;height:2px;background:#bfc6cb"></div>
<svg class="a" style="left:364px;top:316px" width="12" height="12" viewBox="0 0 12 12"><path d="M1.3 1.5 H11.4 L7.4 5.9 V8.5 L5.4 9.8 V5.9 Z" fill="none" stroke="#1f1f1f" stroke-width="1.05" stroke-linejoin="miter"/></svg>
<div class="t" style="left:375.5px;top:333px;font-size:12px;color:#1f1f1f;transform:rotate(90deg);transform-origin:0 0"><span style="transform:scaleX(.93);transform-origin:0 0;display:inline-block">Filters</span></div>
<div class="a" style="left:525px;top:285px;width:873px;height:617px;background:#fff"></div>
<div class="a" style="left:526px;top:286px;width:871px;height:615px;background:#1a1a1a;box-shadow:inset 0 0 22px 3px #000"></div>
<svg class="a" style="left:526px;top:286px" width="871" height="615" viewBox="526 286 871 615"><defs><linearGradient id="body" x1="0" y1="0" x2="1" y2="1"><stop offset="0" stop-color="#c5c5b9"/><stop offset="0.35" stop-color="#dcdcd0"/><stop offset="0.6" stop-color="#d0d0c4"/><stop offset="0.85" stop-color="#dedfd3"/><stop offset="1" stop-color="#bdbdb2"/></linearGradient><linearGradient id="sbody" x1="1" y1="0" x2="0" y2="1"><stop offset="0" stop-color="#595959"/><stop offset="0.5" stop-color="#9a9a9a"/><stop offset="1" stop-color="#6a6a6a"/></linearGradient><radialGradient id="sock"><stop offset="0" stop-color="#262626"/><stop offset="0.72" stop-color="#2b2b2b"/><stop offset="0.86" stop-color="#5c5c56"/><stop offset="1" stop-color="#aaaaa0"/></radialGradient><radialGradient id="scr"><stop offset="0" stop-color="#e4e4e4"/><stop offset="0.45" stop-color="#c4c4c4"/><stop offset="0.72" stop-color="#8a8a8a"/><stop offset="0.84" stop-color="#6e6e6e"/><stop offset="0.93" stop-color="#c9c9c0"/><stop offset="1" stop-color="#dadace"/></radialGradient><radialGradient id="scrin" cx="0.45" cy="0.4"><stop offset="0" stop-color="#e6e6e6"/><stop offset="0.6" stop-color="#b8b8b8"/><stop offset="1" stop-color="#7a7a7a"/></radialGradient><linearGradient id="hole" x1="0" y1="0" x2="0" y2="1"><stop offset="0" stop-color="#4a4a4a"/><stop offset="0.5" stop-color="#121212"/><stop offset="1" stop-color="#5a5a5a"/></linearGradient><linearGradient id="stem" x1="0" y1="0" x2="0" y2="1"><stop offset="0" stop-color="#8a8a8a"/><stop offset="1" stop-color="#4a4a4a"/></linearGradient><radialGradient id="ssock" cx="0.5" cy="0.5"><stop offset="0" stop-color="#7a7a7a"/><stop offset="0.86" stop-color="#777"/><stop offset="1" stop-color="#4a4a4a"/></radialGradient><linearGradient id="sring" x1="0" y1="0" x2="1" y2="1"><stop offset="0" stop-color="#1a1a1a"/><stop offset="0.5" stop-color="#2e2e2e"/><stop offset="1" stop-color="#1a1a1a"/></linearGradient><g id="xlr"><rect x="0.5" y="9" width="139" height="158" rx="13" fill="url(#body)" stroke="#a5a59b" stroke-width="0.8"/><circle cx="69.5" cy="88.5" r="62" fill="#d9d9cd" stroke="#c2c2b7" stroke-width="1"/><circle cx="69.5" cy="87" r="54" fill="url(#sock)"/><path d="M18.44 68.42 A54 54 0 0 1 28.75 50.57 M110.25 50.57 A54 54 0 0 1 120.56 68.42" fill="none" stroke="#d8d8cc" stroke-width="8" opacity="0.85"/><path d="M38 55.5 H101 A42.5 42.5 0 1 1 38 55.5 Z" fill="#181818"/><circle cx="45" cy="87.8" r="8.6" fill="#6d6d6d"/><circle cx="45" cy="87" r="8.5" fill="#000"/><circle cx="94" cy="87.8" r="8.6" fill="#6d6d6d"/><circle cx="94" cy="87" r="8.5" fill="#000"/><circle cx="69.5" cy="108.3" r="8.6" fill="#6d6d6d"/><circle cx="69.5" cy="107.5" r="8.5" fill="#000"/><rect x="58.5" y="133" width="22" height="9" fill="#76766f"/><path d="M56 28 H84 L82 39 H58 Z" fill="url(#stem)"/><rect x="42.5" y="0" width="55" height="28" rx="13" fill="#3b3b3b" stroke="#222" stroke-width="0.8"/><text x="70" y="20" text-anchor="middle" font-family="Liberation Sans" font-size="13.5" fill="#a3a3a3">PUSH</text><circle cx="18.5" cy="27" r="13.7" fill="url(#scr)"/><path d="M15.2 23.7 L21.8 30.3 M21.8 23.7 L15.2 30.3" stroke="#383838" stroke-width="3.2"/><circle cx="120.5" cy="148.5" r="13.7" fill="url(#scr)"/><path d="M117.2 145.2 L123.8 151.8 M123.8 145.2 L117.2 151.8" stroke="#383838" stroke-width="3.2"/><circle cx="120" cy="27" r="11" fill="#e6e6dc" stroke="#c4c4ba" stroke-width="1.2"/><path d="M113.5 32 Q112.5 20.5 120 20.5 Q127.5 20.5 126.5 30 M119 21 V34 M119 21.5 L123.5 23 V28 L121 27" fill="none" stroke="#b0b0a6" stroke-width="1.1"/></g><g id="dmx"><rect x="0.5" y="9" width="139" height="158" rx="13" fill="url(#body)" stroke="#a5a59b" stroke-width="0.8"/><circle cx="69.5" cy="88.5" r="62" fill="#d9d9cd" stroke="#c2c2b7" stroke-width="1"/><circle cx="69.5" cy="87" r="54" fill="url(#sock)"/><path d="M18.44 68.42 A54 54 0 0 1 28.75 50.57 M110.25 50.57 A54 54 0 0 1 120.56 68.42" fill="none" stroke="#d8d8cc" stroke-width="8" opacity="0.85"/><circle cx="69.5" cy="87" r="43" fill="#1d1d1d"/><circle cx="69.5" cy="88" r="35" fill="none" stroke="#080808" stroke-width="1.2"/><path d="M56.5 54 V71 H83.5 V54" fill="#1d1d1d" stroke="#080808" stroke-width="1.2"/><circle cx="31" cy="57" r="4" fill="#1d1d1d"/><circle cx="47.5" cy="82" r="3.8" fill="#000"/><path d="M45.0 84.8 A3.8 3.8 0 0 0 51.0 83" fill="none" stroke="#555" stroke-width="0.7"/><circle cx="91.5" cy="86.5" r="3.8" fill="#000"/><path d="M89.0 89.3 A3.8 3.8 0 0 0 95.0 87.5" fill="none" stroke="#555" stroke-width="0.7"/><circle cx="58" cy="100.7" r="3.8" fill="#000"/><path d="M55.5 103.5 A3.8 3.8 0 0 0 61.5 101.7" fill="none" stroke="#555" stroke-width="0.7"/><circle cx="79.5" cy="105.2" r="3.8" fill="#000"/><path d="M77.0 108.0 A3.8 3.8 0 0 0 83.0 106.2" fill="none" stroke="#555" stroke-width="0.7"/><rect x="58.5" y="133" width="22" height="9" fill="#76766f"/><path d="M56 28 H84 L82 39 H58 Z" fill="url(#stem)"/><rect x="42.5" y="0" width="55" height="28" rx="13" fill="#3b3b3b" stroke="#222" stroke-width="0.8"/><text x="70" y="20" text-anchor="middle" font-family="Liberation Sans" font-size="13.5" fill="#a3a3a3">PUSH</text><circle cx="18.5" cy="27" r="13.7" fill="url(#scr)"/><path d="M15.2 23.7 L21.8 30.3 M21.8 23.7 L15.2 30.3" stroke="#383838" stroke-width="3.2"/><circle cx="120.5" cy="148.5" r="13.7" fill="url(#scr)"/><path d="M117.2 145.2 L123.8 151.8 M123.8 145.2 L117.2 151.8" stroke="#383838" stroke-width="3.2"/><circle cx="120" cy="27" r="11" fill="#e6e6dc" stroke="#c4c4ba" stroke-width="1.2"/><path d="M113.5 32 Q112.5 20.5 120 20.5 Q127.5 20.5 126.5 30 M119 21 V34 M119 21.5 L123.5 23 V28 L121 27" fill="none" stroke="#b0b0a6" stroke-width="1.1"/></g><g id="spk"><rect x="0" y="1" width="140" height="167" rx="14" fill="url(#sbody)" stroke="#4a4a4a" stroke-width="0.8"/><circle cx="70" cy="84" r="65" fill="url(#ssock)"/><circle cx="70" cy="84" r="65" fill="none" stroke="#5b5b5b" stroke-width="1.2"/><circle cx="70" cy="83.5" r="49.5" fill="#000"/><path d="M52 38 Q52 26 58 26 H82 Q88 26 88 38 Z" fill="#000"/><rect x="61" y="128" width="17" height="8" fill="#111"/><circle cx="70" cy="84" r="32" fill="url(#sring)"/><rect x="34" y="74" width="74" height="20" fill="none"/><circle cx="70" cy="84" r="19" fill="#000"/><path d="M55 90 A16 16 0 0 0 84 92" fill="none" stroke="#777" stroke-width="1"/><circle cx="18" cy="19" r="13.7" fill="url(#scr)"/><path d="M14.7 15.7 L21.3 22.3 M21.3 15.7 L14.7 22.3" stroke="#383838" stroke-width="3.2"/><circle cx="121" cy="148" r="13.7" fill="url(#scr)"/><path d="M117.7 144.7 L124.3 151.3 M124.3 144.7 L117.7 151.3" stroke="#383838" stroke-width="3.2"/></g></defs><circle cx="713.5" cy="368.5" r="22.8" fill="url(#hole)"/><circle cx="713.5" cy="368.5" r="10.3" fill="#fafafa"/><circle cx="713.5" cy="819" r="22.8" fill="url(#hole)"/><circle cx="713.5" cy="819" r="10.3" fill="#fafafa"/><circle cx="961.5" cy="368.5" r="22.8" fill="url(#hole)"/><circle cx="961.5" cy="368.5" r="10.3" fill="#fafafa"/><circle cx="961.5" cy="819" r="22.8" fill="url(#hole)"/><circle cx="961.5" cy="819" r="10.3" fill="#fafafa"/><circle cx="1208.5" cy="368.5" r="22.8" fill="url(#hole)"/><circle cx="1208.5" cy="368.5" r="10.3" fill="#fafafa"/><circle cx="1208.5" cy="819" r="22.8" fill="url(#hole)"/><circle cx="1208.5" cy="819" r="10.3" fill="#fafafa"/><use href="#xlr" x="644" y="424"/><use href="#xlr" x="892" y="424"/><use href="#spk" x="1150" y="424"/><use href="#xlr" x="644" y="623.5"/><use href="#xlr" x="892" y="623.5"/><use href="#dmx" x="1150" y="623.5"/></svg>
<div class="t" style="left:613.5px;top:401px;width:200px;text-align:center;font-size:24px;color:#fff"><span style="display:inline-block;transform:scaleX(.9);transform-origin:50% 0">Mic 01</span></div>
<div class="t" style="left:861.5px;top:401px;width:200px;text-align:center;font-size:24px;color:#fff"><span style="display:inline-block;transform:scaleX(.9);transform-origin:50% 0">Mic 02</span></div>
<div class="t" style="left:1119.5px;top:401px;width:200px;text-align:center;font-size:24px;color:#fff"><span style="display:inline-block;transform:scaleX(.9);transform-origin:50% 0">Speaker 01</span></div>
<div class="t" style="left:613.5px;top:601px;width:200px;text-align:center;font-size:24px;color:#fff"><span style="display:inline-block;transform:scaleX(.9);transform-origin:50% 0">Mic 03</span></div>
<div class="t" style="left:861.5px;top:601px;width:200px;text-align:center;font-size:24px;color:#fff"><span style="display:inline-block;transform:scaleX(.9);transform-origin:50% 0">Mic 04</span></div>
<div class="t" style="left:1119.5px;top:601px;width:200px;text-align:center;font-size:24px;color:#fff"><span style="display:inline-block;transform:scaleX(.9);transform-origin:50% 0">DMX 01</span></div>
<div class="a" style="left:384px;top:728px;width:2px;height:2px;background:#bdbdbd"></div>
<div class="a" style="left:387px;top:728px;width:2px;height:2px;background:#bdbdbd"></div>
<div class="a" style="left:1533px;top:728px;width:2px;height:2px;background:#bdbdbd"></div>
<div class="a" style="left:1536px;top:728px;width:2px;height:2px;background:#bdbdbd"></div>
<div class="a" style="left:946px;top:904px;width:2px;height:2px;background:#bdbdbd"></div>
<div class="a" style="left:946px;top:907px;width:2px;height:2px;background:#bdbdbd"></div>
<div class="a" style="left:384px;top:732px;width:2px;height:2px;background:#bdbdbd"></div>
<div class="a" style="left:387px;top:732px;width:2px;height:2px;background:#bdbdbd"></div>
<div class="a" style="left:1533px;top:732px;width:2px;height:2px;background:#bdbdbd"></div>
<div class="a" style="left:1536px;top:732px;width:2px;height:2px;background:#bdbdbd"></div>
<div class="a" style="left:950px;top:904px;width:2px;height:2px;background:#bdbdbd"></div>
<div class="a" style="left:950px;top:907px;width:2px;height:2px;background:#bdbdbd"></div>
<div class="a" style="left:384px;top:736px;width:2px;height:2px;background:#bdbdbd"></div>
<div class="a" style="left:387px;top:736px;width:2px;height:2px;background:#bdbdbd"></div>
<div class="a" style="left:1533px;top:736px;width:2px;height:2px;background:#bdbdbd"></div>
<div class="a" style="left:1536px;top:736px;width:2px;height:2px;background:#bdbdbd"></div>
<div class="a" style="left:954px;top:904px;width:2px;height:2px;background:#bdbdbd"></div>
<div class="a" style="left:954px;top:907px;width:2px;height:2px;background:#bdbdbd"></div>
<div class="a" style="left:384px;top:740px;width:2px;height:2px;background:#bdbdbd"></div>
<div class="a" style="left:387px;top:740px;width:2px;height:2px;background:#bdbdbd"></div>
<div class="a" style="left:1533px;top:740px;width:2px;height:2px;background:#bdbdbd"></div>
<div class="a" style="left:1536px;top:740px;width:2px;height:2px;background:#bdbdbd"></div>
<div class="a" style="left:958px;top:904px;width:2px;height:2px;background:#bdbdbd"></div>
<div class="a" style="left:958px;top:907px;width:2px;height:2px;background:#bdbdbd"></div>
<div class="a" style="left:384px;top:744px;width:2px;height:2px;background:#bdbdbd"></div>
<div class="a" style="left:387px;top:744px;width:2px;height:2px;background:#bdbdbd"></div>
<div class="a" style="left:1533px;top:744px;width:2px;height:2px;background:#bdbdbd"></div>
<div class="a" style="left:1536px;top:744px;width:2px;height:2px;background:#bdbdbd"></div>
<div class="a" style="left:962px;top:904px;width:2px;height:2px;background:#bdbdbd"></div>
<div class="a" style="left:962px;top:907px;width:2px;height:2px;background:#bdbdbd"></div>
<div class="a" style="left:384px;top:748px;width:2px;height:2px;background:#bdbdbd"></div>
<div class="a" style="left:387px;top:748px;width:2px;height:2px;background:#bdbdbd"></div>
<div class="a" style="left:1533px;top:748px;width:2px;height:2px;background:#bdbdbd"></div>
<div class="a" style="left:1536px;top:748px;width:2px;height:2px;background:#bdbdbd"></div>
<div class="a" style="left:966px;top:904px;width:2px;height:2px;background:#bdbdbd"></div>
<div class="a" style="left:966px;top:907px;width:2px;height:2px;background:#bdbdbd"></div>
<div class="a" style="left:384px;top:752px;width:2px;height:2px;background:#bdbdbd"></div>
<div class="a" style="left:387px;top:752px;width:2px;height:2px;background:#bdbdbd"></div>
<div class="a" style="left:1533px;top:752px;width:2px;height:2px;background:#bdbdbd"></div>
<div class="a" style="left:1536px;top:752px;width:2px;height:2px;background:#bdbdbd"></div>
<div class="a" style="left:970px;top:904px;width:2px;height:2px;background:#bdbdbd"></div>
<div class="a" style="left:970px;top:907px;width:2px;height:2px;background:#bdbdbd"></div>
<div class="a" style="left:384px;top:756px;width:2px;height:2px;background:#bdbdbd"></div>
<div class="a" style="left:387px;top:756px;width:2px;height:2px;background:#bdbdbd"></div>
<div class="a" style="left:1533px;top:756px;width:2px;height:2px;background:#bdbdbd"></div>
<div class="a" style="left:1536px;top:756px;width:2px;height:2px;background:#bdbdbd"></div>
<div class="a" style="left:974px;top:904px;width:2px;height:2px;background:#bdbdbd"></div>
<div class="a" style="left:974px;top:907px;width:2px;height:2px;background:#bdbdbd"></div>
<div class="a" style="left:393px;top:956px;width:1137px;height:1px;background:#dfe2e6"></div>
<div class="a" style="left:392px;top:912px;width:97px;height:45px;background:#fff;border:1px solid #dfe2e6;border-bottom:none;border-radius:6px 6px 0 0"></div>
<div class="t" style="left:413px;top:930px;font-size:14px;color:#111;-webkit-text-stroke:.35px #111">Products</div>
<div class="t" style="left:511px;top:930px;font-size:14px;color:#a6b2c0;-webkit-text-stroke:.35px #a6b2c0">All Products</div>
<div class="a" style="left:1489px;top:965px;width:37px;height:33px;background:#f18892;border-radius:3px"></div>
<svg class="a" style="left:1501px;top:973px" width="13" height="15" viewBox="0 0 13 15"><path d="M1.2 3.6 H11.8" stroke="#fff" stroke-width="1.2"/><path d="M4.3 3.4 Q4.6 1.4 6.5 1.4 Q8.4 1.4 8.7 3.4" fill="none" stroke="#fff" stroke-width="1.1"/><path d="M2.4 4 L2.9 12 Q3.1 13.6 4.8 13.6 H8.2 Q9.9 13.6 10.1 12 L10.6 4" fill="none" stroke="#fff" stroke-width="1.2"/><path d="M4.5 5.6 V11.6 M6.5 5.6 V11.6 M8.5 5.6 V11.6" stroke="#fff" stroke-width="0.9"/></svg>
<div class="a" style="left:393px;top:1002px;width:1115px;height:66px;background:#f4f6f6;"></div>
<div class="a" style="left:392px;top:1002px;width:1116px;height:1px;background:#c3cacf"></div>
<div class="a" style="left:392px;top:1002px;width:1px;height:197px;background:#c3cacf"></div>
<div class="a" style="left:393px;top:1035px;width:1115px;height:1px;background:#c9d0d4"></div>
<div class="a" style="left:393px;top:1067px;width:1115px;height:1px;background:#c9d0d4"></div>
<div class="t" style="left:405px;top:1014px;font-size:12.3px;color:#707b82;">FP-1001</div>
<div class="a" style="left:493px;top:1011px;width:1px;height:16px;background:#d6dbde"></div>
<div class="a" style="left:493px;top:1044px;width:1px;height:16px;background:#d6dbde"></div>
<div class="t" style="left:505px;top:1014px;font-size:12.3px;color:#707b82;">Description</div>
<div class="a" style="left:693px;top:1011px;width:1px;height:16px;background:#d6dbde"></div>
<div class="a" style="left:693px;top:1044px;width:1px;height:16px;background:#d6dbde"></div>
<div class="t" style="left:705px;top:1014px;font-size:12.3px;color:#707b82;">Manufacturer</div>
<div class="a" style="left:893px;top:1011px;width:1px;height:16px;background:#d6dbde"></div>
<div class="a" style="left:893px;top:1044px;width:1px;height:16px;background:#d6dbde"></div>
<div class="t" style="left:905px;top:1014px;font-size:12.3px;color:#707b82;">Model</div>
<div class="a" style="left:1093px;top:1011px;width:1px;height:16px;background:#d6dbde"></div>
<div class="a" style="left:1093px;top:1044px;width:1px;height:16px;background:#d6dbde"></div>
<div class="t" style="left:1105px;top:1014px;font-size:12.3px;color:#707b82;">Type</div>
<div class="a" style="left:1293px;top:1011px;width:1px;height:16px;background:#d6dbde"></div>
<div class="a" style="left:1293px;top:1044px;width:1px;height:16px;background:#d6dbde"></div>
<div class="t" style="left:1305px;top:1014px;font-size:12.3px;color:#707b82;">Gender</div>
<div class="a" style="left:1493px;top:1011px;width:1px;height:16px;background:#d6dbde"></div>
<div class="a" style="left:1493px;top:1044px;width:1px;height:16px;background:#d6dbde"></div>
<div class="t" style="left:1505px;top:1014px;font-size:12.3px;color:#707b82;">E</div>
<div class="a" style="left:705px;top:1042px;width:148px;height:20px;background:#fff;border:1px solid #798b8f"></div>
<svg class="a" style="left:866px;top:1046px" width="12" height="12" viewBox="0 0 12 12"><path d="M1.3 1.5 H11.4 L7.4 5.9 V8.5 L5.4 9.8 V5.9 Z" fill="none" stroke="#1f1f1f" stroke-width="1.05" stroke-linejoin="miter"/></svg>
<div class="a" style="left:905px;top:1042px;width:148px;height:20px;background:#fff;border:1px solid #798b8f"></div>
<svg class="a" style="left:1066px;top:1046px" width="12" height="12" viewBox="0 0 12 12"><path d="M1.3 1.5 H11.4 L7.4 5.9 V8.5 L5.4 9.8 V5.9 Z" fill="none" stroke="#1f1f1f" stroke-width="1.05" stroke-linejoin="miter"/></svg>
<div class="a" style="left:1105px;top:1042px;width:148px;height:20px;background:#e9e9e9;border:1px solid #dadada"></div>
<svg class="a" style="left:1266px;top:1046px" width="12" height="12" viewBox="0 0 12 12"><path d="M1.3 1.5 H11.4 L7.4 5.9 V8.5 L5.4 9.8 V5.9 Z" fill="none" stroke="#1f1f1f" stroke-width="1.05" stroke-linejoin="miter"/></svg>
<div class="a" style="left:1305px;top:1042px;width:148px;height:20px;background:#e9e9e9;border:1px solid #dadada"></div>
<svg class="a" style="left:1466px;top:1046px" width="12" height="12" viewBox="0 0 12 12"><path d="M1.3 1.5 H11.4 L7.4 5.9 V8.5 L5.4 9.8 V5.9 Z" fill="none" stroke="#1f1f1f" stroke-width="1.05" stroke-linejoin="miter"/></svg>
<div class="a" style="left:1505px;top:1042px;width:4px;height:20px;background:#fff;border:1px solid #798b8f;border-right:none"></div>
<div class="a" style="left:393px;top:1068px;width:1098px;height:112px;overflow:hidden"><div class="a" style="left:0px;top:0px;width:1098px;height:28px;background:#ffffff;"></div>
<div class="a" style="left:0px;top:27px;width:1098px;height:1px;background:#e0e4e7"></div>
<div class="a" style="left:35px;top:4px;width:30px;height:21px;background:#161616;"></div>
<div class="a" style="left:41px;top:7px;width:1.5px;height:1.5px;background:#3a3a3a;"></div>
<div class="a" style="left:41px;top:20px;width:1.5px;height:1.5px;background:#3a3a3a;"></div>
<div class="a" style="left:49.5px;top:7px;width:1.5px;height:1.5px;background:#3a3a3a;"></div>
<div class="a" style="left:49.5px;top:20px;width:1.5px;height:1.5px;background:#3a3a3a;"></div>
<div class="a" style="left:58px;top:7px;width:1.5px;height:1.5px;background:#3a3a3a;"></div>
<div class="a" style="left:58px;top:20px;width:1.5px;height:1.5px;background:#3a3a3a;"></div>
<div class="t" style="left:112px;top:8px;font-size:13px;color:#141414;"><span style="transform:scaleX(.885);transform-origin:0 0;display:inline-block">US 3 Gang Blank Wall Plate Black</span></div>
<div class="t" style="left:312px;top:8px;font-size:13px;color:#141414;"><span style="transform:scaleX(.885);transform-origin:0 0;display:inline-block">Generic</span></div>
<div class="t" style="left:512px;top:8px;font-size:13px;color:#141414;"><span style="transform:scaleX(.885);transform-origin:0 0;display:inline-block">US3G B</span></div>
<div class="t" style="left:712px;top:8px;font-size:13px;color:#141414;"><span style="transform:scaleX(.885);transform-origin:0 0;display:inline-block">Plate</span></div>
<div class="a" style="left:0px;top:28px;width:1098px;height:28px;background:#f9fbfe;"></div>
<div class="a" style="left:0px;top:55px;width:1098px;height:1px;background:#e0e4e7"></div>
<svg class="a" style="left:41.5px;top:31.5px" width="17.5" height="21.5" viewBox="0 0 19 23"><rect x="0.5" y="1.8" width="18" height="20.7" rx="3" fill="#c9c9bd" stroke="#8a8a80" stroke-width="0.6"/><rect x="6" y="0" width="7" height="4" rx="1.5" fill="#444"/><circle cx="9.5" cy="12.5" r="7" fill="#2a2a2a"/><circle cx="9.5" cy="12.8" r="5.6" fill="#151515"/><circle cx="7.3" cy="12" r="1.1" fill="#000"/><circle cx="11.7" cy="12" r="1.1" fill="#000"/><circle cx="9.5" cy="14.8" r="1.1" fill="#000"/><circle cx="3" cy="4.5" r="1.5" fill="#aaa"/><circle cx="16" cy="19.8" r="1.5" fill="#aaa"/></svg>
<div class="t" style="left:112px;top:36px;font-size:13px;color:#141414;"><span style="transform:scaleX(.885);transform-origin:0 0;display:inline-block">3 Pole Female Receptacle, Sold...</span></div>
<div class="t" style="left:312px;top:36px;font-size:13px;color:#141414;"><span style="transform:scaleX(.885);transform-origin:0 0;display:inline-block">Neutrik</span></div>
<div class="t" style="left:512px;top:36px;font-size:13px;color:#141414;"><span style="transform:scaleX(.885);transform-origin:0 0;display:inline-block">NC3FD-L-1</span></div>
<div class="t" style="left:712px;top:36px;font-size:13px;color:#141414;"><span style="transform:scaleX(.885);transform-origin:0 0;display:inline-block">Connector</span></div>
<div class="t" style="left:912px;top:36px;font-size:13px;color:#141414;"><span style="transform:scaleX(.885);transform-origin:0 0;display:inline-block">Female</span></div>
<div class="a" style="left:0px;top:56px;width:1098px;height:28px;background:#ffffff;"></div>
<div class="a" style="left:0px;top:83px;width:1098px;height:1px;background:#e0e4e7"></div>
<svg class="a" style="left:41.5px;top:59.5px" width="17.5" height="21.5" viewBox="0 0 19 23"><rect x="0.5" y="1.8" width="18" height="20.7" rx="3" fill="#c9c9bd" stroke="#8a8a80" stroke-width="0.6"/><rect x="6" y="0" width="7" height="4" rx="1.5" fill="#444"/><circle cx="9.5" cy="12.5" r="7" fill="#2a2a2a"/><circle cx="9.5" cy="12.8" r="5.6" fill="#151515"/><circle cx="7.3" cy="12" r="1.1" fill="#000"/><circle cx="11.7" cy="12" r="1.1" fill="#000"/><circle cx="9.5" cy="14.8" r="1.1" fill="#000"/><circle cx="3" cy="4.5" r="1.5" fill="#aaa"/><circle cx="16" cy="19.8" r="1.5" fill="#aaa"/></svg>
<div class="t" style="left:112px;top:64px;font-size:13px;color:#141414;"><span style="transform:scaleX(.885);transform-origin:0 0;display:inline-block">3 Pole Female Receptacle, Sold...</span></div>
<div class="t" style="left:312px;top:64px;font-size:13px;color:#141414;"><span style="transform:scaleX(.885);transform-origin:0 0;display:inline-block">Neutrik</span></div>
<div class="t" style="left:512px;top:64px;font-size:13px;color:#141414;"><span style="transform:scaleX(.885);transform-origin:0 0;display:inline-block">NC3FD-L-1</span></div>
<div class="t" style="left:712px;top:64px;font-size:13px;color:#141414;"><span style="transform:scaleX(.885);transform-origin:0 0;display:inline-block">Connector</span></div>
<div class="t" style="left:912px;top:64px;font-size:13px;color:#141414;"><span style="transform:scaleX(.885);transform-origin:0 0;display:inline-block">Female</span></div>
<div class="a" style="left:0px;top:84px;width:1098px;height:28px;background:#f9fbfe;"></div>
<div class="a" style="left:0px;top:111px;width:1098px;height:1px;background:#e0e4e7"></div>
<svg class="a" style="left:41.5px;top:87.5px" width="17.5" height="21.5" viewBox="0 0 19 23"><rect x="0.5" y="1.8" width="18" height="20.7" rx="3" fill="#c9c9bd" stroke="#8a8a80" stroke-width="0.6"/><rect x="6" y="0" width="7" height="4" rx="1.5" fill="#444"/><circle cx="9.5" cy="12.5" r="7" fill="#2a2a2a"/><circle cx="9.5" cy="12.8" r="5.6" fill="#151515"/><circle cx="7.3" cy="12" r="1.1" fill="#000"/><circle cx="11.7" cy="12" r="1.1" fill="#000"/><circle cx="9.5" cy="14.8" r="1.1" fill="#000"/><circle cx="3" cy="4.5" r="1.5" fill="#aaa"/><circle cx="16" cy="19.8" r="1.5" fill="#aaa"/></svg>
<div class="t" style="left:112px;top:92px;font-size:13px;color:#141414;"><span style="transform:scaleX(.885);transform-origin:0 0;display:inline-block">3 Pole Female Receptacle, Sold...</span></div>
<div class="t" style="left:312px;top:92px;font-size:13px;color:#141414;"><span style="transform:scaleX(.885);transform-origin:0 0;display:inline-block">Neutrik</span></div>
<div class="t" style="left:512px;top:92px;font-size:13px;color:#141414;"><span style="transform:scaleX(.885);transform-origin:0 0;display:inline-block">NC3FD-L-1</span></div>
<div class="t" style="left:712px;top:92px;font-size:13px;color:#141414;"><span style="transform:scaleX(.885);transform-origin:0 0;display:inline-block">Connector</span></div>
<div class="t" style="left:912px;top:92px;font-size:13px;color:#141414;"><span style="transform:scaleX(.885);transform-origin:0 0;display:inline-block">Female</span></div></div>
<div class="a" style="left:1491px;top:1068px;width:17px;height:112px;background:#f1f1f1;"></div>
<svg class="a" style="left:1495px;top:1074px" width="8" height="5" viewBox="0 0 8 5"><path d="M0 5 L4 0.5 L8 5 Z" fill="#a8a8a8"/></svg>
<div class="a" style="left:1493px;top:1085px;width:13px;height:46px;background:#c1c1c1;"></div>
<svg class="a" style="left:1495px;top:1170px" width="8" height="5" viewBox="0 0 8 5"><path d="M0 0 L4 4.5 L8 0 Z" fill="#505050"/></svg>
<div class="a" style="left:393px;top:1180px;width:1098px;height:18px;background:#f1f1f1;"></div>
<svg class="a" style="left:398px;top:1185px" width="5" height="8" viewBox="0 0 5 8"><path d="M5 0 L0.5 4 L5 8 Z" fill="#a8a8a8"/></svg>
<div class="a" style="left:410px;top:1183px;width:468px;height:13px;background:#c1c1c1;"></div>
<svg class="a" style="left:1481px;top:1185px" width="5" height="8" viewBox="0 0 5 8"><path d="M0 0 L4.5 4 L0 8 Z" fill="#505050"/></svg>
<div class="a" style="left:1491px;top:1180px;width:17px;height:18px;background:#f8f8f8;"></div>
<div class="a" style="left:392px;top:1198px;width:1116px;height:2px;background:#bfc6cb"></div>
<div class="a" style="left:1508px;top:1002px;width:22px;height:197px;background:#f8f8f8;"></div>
<div class="a" style="left:1508px;top:1002px;width:1px;height:197px;background:#c3cacf"></div>
<div class="a" style="left:1529px;top:1002px;width:1px;height:197px;background:#c3cacf"></div>
<div class="a" style="left:1508px;top:1002px;width:22px;height:1px;background:#c3cacf"></div>
<div class="a" style="left:1508px;top:1020px;width:22px;height:1px;background:#c3cacf"></div>
<div class="a" style="left:1508px;top:1091px;width:22px;height:1px;background:#c3cacf"></div>
<div class="a" style="left:1509px;top:1021px;width:20px;height:70px;background:#fbfbfc;"></div>
<div class="a" style="left:1508px;top:1198px;width:22px;height:2px;background:#bfc6cb"></div>
<svg class="a" style="left:1513px;top:1033px" width="12" height="12" viewBox="0 0 12 12"><path d="M1.3 1.5 H11.4 L7.4 5.9 V8.5 L5.4 9.8 V5.9 Z" fill="none" stroke="#1f1f1f" stroke-width="1.05" stroke-linejoin="miter"/></svg>
<div class="t" style="left:1524.5px;top:1050px;font-size:12px;color:#1f1f1f;transform:rotate(90deg);transform-origin:0 0"><span style="transform:scaleX(.93);transform-origin:0 0;display:inline-block">Filters</span></div>
<div class="a" style="left:1542px;top:286px;width:357px;height:66px;background:#f4f6f6;"></div>
<div class="a" style="left:1542px;top:352px;width:357px;height:847px;background:#f8f8f8;"></div>
<div class="a" style="left:1541px;top:286px;width:358px;height:1px;background:#c3cacf"></div>
<div class="a" style="left:1541px;top:286px;width:1px;height:913px;background:#c3cacf"></div>
<div class="a" style="left:1542px;top:319px;width:357px;height:1px;background:#c9d0d4"></div>
<div class="a" style="left:1542px;top:351px;width:357px;height:1px;background:#c9d0d4"></div>
<div class="t" style="left:1555px;top:298px;font-size:12.3px;color:#707b82;">Name</div>
<div class="a" style="left:1719px;top:295px;width:1px;height:16px;background:#d6dbde"></div>
<div class="t" style="left:1732px;top:298px;font-size:12.3px;color:#707b82;">Value</div>
<div class="a" style="left:1897px;top:295px;width:1px;height:16px;background:#d6dbde"></div>
<div class="a" style="left:1554px;top:326px;width:127px;height:20px;background:#fff;border:1px solid #798b8f"></div>
<svg class="a" style="left:1694px;top:330px" width="12" height="12" viewBox="0 0 12 12"><path d="M1.3 1.5 H11.4 L7.4 5.9 V8.5 L5.4 9.8 V5.9 Z" fill="none" stroke="#1f1f1f" stroke-width="1.05" stroke-linejoin="miter"/></svg>
<div class="a" style="left:1719px;top:328px;width:1px;height:16px;background:#d6dbde"></div>
<div class="a" style="left:1732px;top:326px;width:126px;height:20px;background:#e9e9e9;border:1px solid #dadada"></div>
<svg class="a" style="left:1872px;top:330px" width="12" height="12" viewBox="0 0 12 12"><path d="M1.3 1.5 H11.4 L7.4 5.9 V8.5 L5.4 9.8 V5.9 Z" fill="none" stroke="#1f1f1f" stroke-width="1.05" stroke-linejoin="miter"/></svg>
<div class="a" style="left:1897px;top:328px;width:1px;height:16px;background:#d6dbde"></div>
<div class="a" style="left:1542px;top:352px;width:357px;height:28px;background:#ffffff;"></div>
<div class="a" style="left:1542px;top:379px;width:357px;height:1px;background:#e0e4e7"></div>
<svg class="a" style="left:1556.5px;top:363px" width="10" height="6" viewBox="0 0 10 6"><path d="M1 0.8 L5 4.8 L9 0.8" fill="none" stroke="#333" stroke-width="1.1"/></svg>
<div class="t" style="left:1582px;top:359px;font-size:13px;color:#141414;"><span style="transform:scaleX(.885);transform-origin:0 0;display:inline-block">Grid (2)</span></div>
<div class="a" style="left:1542px;top:380px;width:357px;height:28px;background:#f9fbfe;"></div>
<div class="a" style="left:1542px;top:407px;width:357px;height:1px;background:#e0e4e7"></div>
<div class="t" style="left:1614px;top:389px;font-size:12.3px;color:#111;font-weight:bold">X</div>
<div class="t" style="left:1732px;top:389px;font-size:12.3px;color:#111;font-weight:bold">4.00 mm</div>
<div class="a" style="left:1542px;top:408px;width:357px;height:28px;background:#ffffff;"></div>
<div class="a" style="left:1542px;top:435px;width:357px;height:1px;background:#e0e4e7"></div>
<div class="t" style="left:1614px;top:417px;font-size:12.3px;color:#111;font-weight:bold">Y</div>
<div class="t" style="left:1732px;top:417px;font-size:12.3px;color:#111;font-weight:bold">5.00 mm</div>
<div class="a" style="left:1542px;top:436px;width:357px;height:28px;background:#f9fbfe;"></div>
<div class="a" style="left:1542px;top:463px;width:357px;height:1px;background:#e0e4e7"></div>
<svg class="a" style="left:1556.5px;top:447px" width="10" height="6" viewBox="0 0 10 6"><path d="M1 0.8 L5 4.8 L9 0.8" fill="none" stroke="#333" stroke-width="1.1"/></svg>
<div class="t" style="left:1582px;top:443px;font-size:13px;color:#141414;"><span style="transform:scaleX(.885);transform-origin:0 0;display:inline-block">Snaps (2)</span></div>
<div class="a" style="left:1542px;top:464px;width:357px;height:28px;background:#ffffff;"></div>
<div class="a" style="left:1542px;top:491px;width:357px;height:1px;background:#e0e4e7"></div>
<div class="t" style="left:1614px;top:473px;font-size:12.3px;color:#111;font-weight:bold">X</div>
<div class="t" style="left:1732px;top:473px;font-size:12.3px;color:#111;font-weight:bold">1</div>
<div class="a" style="left:1542px;top:492px;width:357px;height:28px;background:#f9fbfe;"></div>
<div class="a" style="left:1542px;top:519px;width:357px;height:1px;background:#e0e4e7"></div>
<div class="t" style="left:1614px;top:501px;font-size:12.3px;color:#111;font-weight:bold">Y</div>
<div class="t" style="left:1732px;top:501px;font-size:12.3px;color:#111;font-weight:bold">1</div>
<div class="a" style="left:1899px;top:286px;width:1px;height:913px;background:#c3cacf"></div>
<div class="a" style="left:1541px;top:1198px;width:359px;height:2px;background:#bfc6cb"></div>
<div class="a" style="left:1899px;top:286px;width:22px;height:913px;background:#f8f8f8;"></div>
<div class="a" style="left:1899px;top:286px;width:1px;height:913px;background:#c3cacf"></div>
<div class="a" style="left:1920px;top:286px;width:1px;height:913px;background:#c3cacf"></div>
<div class="a" style="left:1899px;top:286px;width:22px;height:1px;background:#c3cacf"></div>
<div class="a" style="left:1899px;top:303px;width:22px;height:1px;background:#c3cacf"></div>
<div class="a" style="left:1899px;top:374px;width:22px;height:1px;background:#c3cacf"></div>
<div class="a" style="left:1900px;top:304px;width:20px;height:70px;background:#fbfbfc;"></div>
<div class="a" style="left:1899px;top:1198px;width:22px;height:2px;background:#bfc6cb"></div>
<svg class="a" style="left:1904px;top:316px" width="12" height="12" viewBox="0 0 12 12"><path d="M1.3 1.5 H11.4 L7.4 5.9 V8.5 L5.4 9.8 V5.9 Z" fill="none" stroke="#1f1f1f" stroke-width="1.05" stroke-linejoin="miter"/></svg>
<div class="t" style="left:1915.5px;top:333px;font-size:12px;color:#1f1f1f;transform:rotate(90deg);transform-origin:0 0"><span style="transform:scaleX(.93);transform-origin:0 0;display:inline-block">Filters</span></div>
</body></html>
